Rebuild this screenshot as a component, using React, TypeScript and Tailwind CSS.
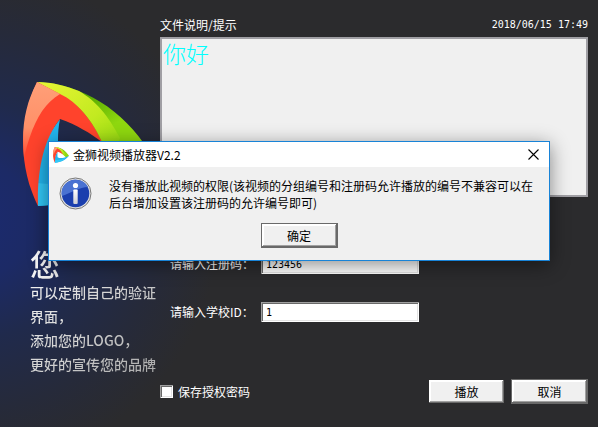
import type { ComponentProps } from 'react';
import { clsx } from 'clsx';

function PlayerLogo({ className }: { className?: string }) {
    return (
        <svg viewBox="0 0 126 126" className={className} aria-hidden="true">
            <defs>
                <linearGradient id="salmon" x1="0" y1="0" x2="0" y2="1">
                    <stop offset="0" stopColor="#ff9f78" />
                    <stop offset="0.6" stopColor="#ff9068" />
                    <stop offset="1" stopColor="#ff4a30" />
                </linearGradient>
                <linearGradient id="lime" x1="0" y1="0" x2="1" y2="1">
                    <stop offset="0" stopColor="#e8f535" />
                    <stop offset="0.6" stopColor="#c2ea20" />
                    <stop offset="1" stopColor="#8fd80f" />
                </linearGradient>
                <linearGradient id="green" x1="0.3" y1="0" x2="1" y2="0.8">
                    <stop offset="0.2" stopColor="#55a800" />
                    <stop offset="0.6" stopColor="#8fd80f" />
                </linearGradient>
            </defs>
            {/* green arm */}
            <path d="M14 0C60 2 100 28 126 69L104 84L79 60C64 38 40 18 14 0Z" fill="url(#green)" />
            <path d="M14 0C30 0 43 4 56 9C74 20 84 32 97 56L92 68L79 60C72 43 57 22 37 13Z" fill="url(#lime)" />
            {/* cyan arm */}
            <path d="M37 37C34 52 35 64 36 80C60 96 90 84 126 69C100 102 62 122 15 124C10 90 18 60 37 37Z" fill="#22b4ec" />
            <path d="M14 101C45 105 75 96 100 86C78 108 48 122 15 124Z" fill="#32c8f8" />
            {/* red arm */}
            <path d="M14 0C-6 42 -3 88 15 124C14 90 20 58 37 37C54 43 67 51 79 60C70 40 55 20 37 12Z" fill="#ff432c" />
            <path d="M14 0C2 23 -2 46 1 76C8 46 18 23 37 12Z" fill="url(#salmon)" />
        </svg>
    );
}

function InfoIcon() {
    return (
        <svg viewBox="0 0 33 33" className="size-[33px] shrink-0" aria-hidden="true">
            <defs>
                <linearGradient id="stem" x1="0" y1="0" x2="0" y2="1">
                    <stop offset="0" stopColor="#fff" />
                    <stop offset="1" stopColor="#cfcfd4" />
                </linearGradient>
            </defs>
            <circle cx="16.5" cy="16.5" r="15.5" fill="#e4e4e4" stroke="#777" />
            <circle cx="16.5" cy="16.5" r="13.8" fill="#1b3fae" />
            {/* gloss over the upper left */}
            <path d="M3 19C1 9 9 2.7 16.5 2.7C22 2.7 27 5.500 29 10C21 10 12 16 3 19Z" fill="#4a72d2" />
            <circle cx="16.5" cy="8.5" r="2.600" fill="#fff" />
            <rect x="14.300" y="12.500" width="4.400" height="14.500" rx="1" fill="url(#stem)" />
        </svg>
    );
}

type BevelButtonProps = ComponentProps<'button'> & { active?: boolean };

function BevelButton({ active, className, ...props }: BevelButtonProps) {
    return (
        <button
            type="button"
            className={clsx(
                'bg-[#f0f0f0] text-xs text-black shadow-[inset_-1px_-1px_#696969,inset_1px_1px_#fff,inset_-2px_-2px_#a0a0a0,inset_2px_2px_#fff]',
                active ? 'h-[25px] w-[77px] border border-[#696969]' : 'h-[23px] w-[75px]',
                className,
            )}
            {...props}
        />
    );
}

function Field({ id, label, value }: { id: string; label: string; value: string }) {
    return (
        <div className="flex items-center">
            <label htmlFor={id} className="w-[91px] shrink-0 whitespace-nowrap">
                {label}
            </label>
            <input
                id={id}
                defaultValue={value}
                className="h-5 w-[158px] rounded-none bg-white px-[5px] font-['DejaVu_Sans_Mono',monospace] text-[10px] text-black shadow-[inset_1px_1px_#a0a0a0,inset_-1px_-1px_#fff,inset_2px_2px_#696969,inset_-2px_-2px_#e3e3e3] outline-none"
            />
        </div>
    );
}

function MessageDialog() {
    return (
        <section
            role="dialog"
            aria-labelledby="dialog-title"
            className="absolute inset-x-12 top-[141px] border border-[#1883d7] bg-[#f0f0f0] text-xs text-black shadow-[0_4px_18px_rgba(0,0,0,0.45)]"
        >
            <header className="flex h-[25px] items-center bg-white pl-1">
                <PlayerLogo className="size-4" />
                <h1 id="dialog-title" className="ml-1 grow">
                    金狮视频播放器V2.2
                </h1>
                <button type="button" aria-label="关闭" className="flex h-full w-8 items-center justify-center">
                    <svg viewBox="0 0 11 11" className="size-[11px]" stroke="#000" strokeWidth="1.1" aria-hidden="true">
                        <path d="M0.5 0.5L10.5 10.5M10.5 0.5L0.5 10.5" />
                    </svg>
                </button>
            </header>
            <div className="flex gap-[17px] px-[10px] pt-[10px]">
                <InfoIcon />
                <p className="leading-[17px]">
                    没有播放此视频的权限(该视频的分组编号和注册码允许播放的编号不兼容可以在后台增加设置该注册码的允许编号即可)
                </p>
            </div>
            <div className="flex justify-center pt-3 pb-3">
                <BevelButton active>确定</BevelButton>
            </div>
        </section>
    );
}

export default function App() {
    return (
        <div className="relative flex min-h-screen bg-[#2b2b2d] bg-[radial-gradient(circle_at_-30px_220px,#1b2a70_0px,#1c2a66_60px,#202a4c_120px,#262a3a_190px,#2b2b2d_250px)] font-['Noto_Sans_CJK_SC',sans-serif] text-xs text-white">
            <aside className="w-40 shrink-0 pt-[82px]">
                <PlayerLogo className="ml-[23px] size-[126px]" />
                <div className="mt-[38px] ml-[30px] bg-linear-to-br from-white to-[#a8a8a8] bg-clip-text text-sm leading-6 font-medium whitespace-nowrap text-transparent">
                    <p className="text-3xl leading-[34px]">您</p>
                    <p>可以定制自己的验证</p>
                    <p>界面，</p>
                    <p>添加您的LOGO，</p>
                    <p>更好的宣传您的品牌</p>
                </div>
            </aside>

            <main className="flex grow flex-col pt-4 pr-[10px] pb-[23px]">
                <div className="flex h-[18px] items-center justify-between">
                    <label htmlFor="notice">文件说明/提示</label>
                    <time className="font-['DejaVu_Sans_Mono',monospace] text-[10px]">2018/06/15 17:49</time>
                </div>
                <textarea
                    id="notice"
                    readOnly
                    defaultValue="你好"
                    className="mt-[3px] h-40 resize-none rounded-none border-2 border-[#a09fa4] bg-[#f0f0f0] px-px text-[23px] leading-7 font-light text-[#00ffff] outline-none"
                />

                <form className="mt-[57px] ml-[10px] flex flex-col gap-7">
                    <Field id="reg-code" label="请输入注册码：" value="123456" />
                    <Field id="school-id" label="请输入学校ID：" value="1" />
                </form>

                <footer className="mt-auto flex items-center justify-between">
                    <label className="flex items-center gap-[5px]">
                        <input
                            type="checkbox"
                            className="size-[13px] appearance-none bg-white shadow-[inset_1px_1px_#a0a0a0,inset_-1px_-1px_#fff,inset_2px_2px_#696969,inset_-2px_-2px_#e3e3e3]"
                        />
                        保存授权密码
                    </label>
                    <div className="flex items-center gap-[7px]">
                        <BevelButton>播放</BevelButton>
                        <BevelButton active>取消</BevelButton>
                    </div>
                </footer>
            </main>

            <MessageDialog />
        </div>
    );
}
